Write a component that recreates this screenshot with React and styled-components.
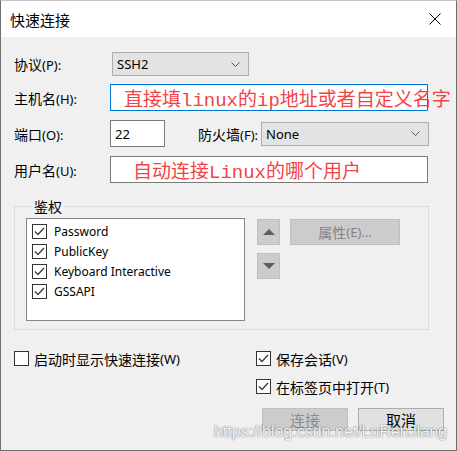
import React from "react";
import styled, { createGlobalStyle, css } from "styled-components";

const GlobalStyle = createGlobalStyle`
  body {
    margin: 0;
    background: #ffffff;
  }
  * {
    box-sizing: border-box;
  }
`;

const Window = styled.div`
  position: relative;
  width: 457px;
  height: 451px;
  display: flex;
  flex-direction: column;
  border: 1px solid #6f6f6f;
  border-top-color: #c4c4c4;
  font-family: "Noto Sans", "Noto Sans CJK SC", sans-serif;
  font-size: 13px;
  color: #000;
  overflow: hidden;
`;

const TitleBar = styled.div`
  height: 36px;
  background: #ffffff;
  display: flex;
  align-items: center;
  justify-content: space-between;
  padding: 0 15px 0 9px;
`;

const Title = styled.div`
  font-family: "Noto Sans CJK SC", sans-serif;
  font-size: 15px;
  margin-top: 1px;
`;

const Body = styled.div`
  flex: 1;
  background: #f0f0f0;
  padding: 15px 12px 0 12px;
  display: flex;
  flex-direction: column;
`;

const Row = styled.div`
  display: flex;
  align-items: center;
  height: ${({ $h }) => $h}px;
  margin-top: ${({ $mt }) => $mt || 0}px;
`;

const Label = styled.div`
  width: ${({ $w }) => $w}px;
  padding-left: ${({ $pl }) => $pl || 0}px;
  margin-left: ${({ $ml }) => $ml || 0}px;
  font-family: "Noto Sans CJK SC", sans-serif;
  font-size: 14px;
  white-space: nowrap;
`;

const Key = styled.span`
  font-family: "Noto Sans", sans-serif;
  font-size: 13px;
`;

const Select = styled.div`
  width: ${({ $w }) => $w}px;
  height: 24px;
  margin-left: ${({ $ml }) => $ml || 0}px;
  background: #e3e3e3;
  border: 1px solid #adadad;
  display: flex;
  align-items: center;
  justify-content: space-between;
  padding: 0 8px 0 4px;
  font-size: 13px;
`;

const TextBox = styled.div`
  width: ${({ $w }) => $w}px;
  height: 27px;
  background: #ffffff;
  border: 1px solid ${({ $focus }) => ($focus ? "#0078d7" : "#7a7a7a")};
  display: flex;
  align-items: center;
  padding-left: ${({ $pl }) => $pl || 4}px;
  white-space: nowrap;
  overflow: visible;
`;

const Note = styled.span`
  font-family: "Liberation Mono", "Noto Sans CJK SC", monospace;
  font-size: 19px;
  color: #f24444;
`;

const Group = styled.fieldset`
  width: 415px;
  margin: 15px 0 0 1px;
  padding: 4px 0 8px 11px;
  border: 1px solid #dcdcdc;
  display: flex;
  align-items: flex-start;
  min-width: 0;
`;

const Legend = styled.legend`
  font-family: "Noto Sans CJK SC", sans-serif;
  font-size: 14px;
  line-height: 16px;
  padding: 0 2px;
  margin-left: 6px;
`;

const ListBox = styled.div`
  width: 219px;
  height: 103px;
  background: #ffffff;
  border: 1px solid #828790;
  padding: 2px 0 0 5px;
`;

const ListItem = styled.div`
  height: 20px;
  display: flex;
  align-items: center;
  font-size: 12px;
`;

const Box = styled.span`
  width: 15px;
  height: 15px;
  flex: none;
  background: #ffffff;
  border: 1px solid #333333;
  display: inline-flex;
  align-items: center;
  justify-content: center;
  margin-right: ${({ $gap }) => $gap}px;
`;

const SideButtons = styled.div`
  display: flex;
  flex-direction: column;
  gap: 8px;
  margin: 1px 10px 0 12px;
`;

const flatBtn = css`
  background: #cccccc;
  border: 1px solid #bfbfbf;
`;

const ArrowButton = styled.div`
  ${flatBtn};
  width: 23px;
  height: 26px;
  display: flex;
  align-items: center;
  justify-content: center;
`;

const Arrow = styled.span`
  width: 0;
  height: 0;
  border-left: 6px solid transparent;
  border-right: 6px solid transparent;
  ${({ $down }) =>
    $down
      ? css`border-top: 6px solid #5f5f5f;`
      : css`border-bottom: 6px solid #5f5f5f;`}
`;

const PropButton = styled.div`
  ${flatBtn};
  width: 110px;
  height: 26px;
  margin-top: 1px;
  display: flex;
  align-items: center;
  justify-content: center;
  color: #838383;
  font-family: "Noto Sans CJK SC", sans-serif;
  font-size: 14px;
`;

const Options = styled.div`
  display: grid;
  grid-template-columns: 242px auto;
  grid-template-rows: 15px 15px;
  row-gap: 13px;
  margin: 21px 0 0 1px;
`;

const Option = styled.div`
  display: flex;
  align-items: center;
  grid-column: ${({ $col }) => $col};
  font-family: "Noto Sans CJK SC", sans-serif;
  font-size: 14px;
  white-space: nowrap;
`;

const Footer = styled.div`
  display: flex;
  justify-content: flex-end;
  gap: 10px;
  margin-top: 14px;
`;

const Button = styled.div`
  width: 86px;
  height: 23px;
  display: flex;
  align-items: center;
  justify-content: center;
  font-family: "Noto Sans CJK SC", sans-serif;
  font-size: 15px;
  ${({ $disabled }) =>
    $disabled
      ? css`
          ${flatBtn};
          color: #8c8c8c;
        `
      : css`
          background: #e1e1e1;
          border: 1px solid #adadad;
          color: #000;
        `}
`;

const Watermark = styled.div`
  position: absolute;
  right: 9px;
  bottom: 9px;
  font-family: "Liberation Sans", sans-serif;
  font-size: 16px;
  color: rgba(255, 255, 255, 0.95);
  text-shadow: 0 0 1px rgba(0, 0, 0, 0.55), 0 0 2px rgba(0, 0, 0, 0.25);
  pointer-events: none;
`;

const Chevron = () => (
  <svg width="9" height="5" viewBox="0 0 9 5">
    <path d="M0.5 0.5 L4.5 4.5 L8.5 0.5" fill="none" stroke="#555" strokeWidth="1" />
  </svg>
);

const Check = () => (
  <svg width="11" height="9" viewBox="0 0 11 9">
    <path d="M1 4.5 L4 7.5 L10 1" fill="none" stroke="#3a3a3a" strokeWidth="1.3" />
  </svg>
);

const CloseIcon = () => (
  <svg width="12" height="12" viewBox="0 0 12 12">
    <path d="M0.5 0.5 L11.5 11.5 M11.5 0.5 L0.5 11.5" stroke="#000" strokeWidth="1" />
  </svg>
);

const CheckBox = ({ checked, gap = 5 }) => (
  <Box $gap={gap}>{checked && <Check />}</Box>
);

const auths = ["Password", "PublicKey", "Keyboard Interactive", "GSSAPI"];

export default function App() {
  return (
    <>
      <GlobalStyle />
      <Window>
        <TitleBar>
          <Title>快速连接</Title>
          <CloseIcon />
        </TitleBar>
        <Body>
          <Row $h={24}>
            <Label $w={97} $pl={1}>
              协议<Key>(P):</Key>
            </Label>
            <Select $w={137} $ml={2}>
              <span>SSH2</span>
              <Chevron />
            </Select>
          </Row>
          <Row $h={27} $mt={8}>
            <Label $w={97} $pl={1}>
              主机名<Key>(H):</Key>
            </Label>
            <TextBox $w={318} $focus $pl={13}>
              <Note>直接填linux的ip地址或者自定义名字</Note>
            </TextBox>
          </Row>
          <Row $h={27} $mt={9}>
            <Label $w={97} $pl={1}>
              端口<Key>(O):</Key>
            </Label>
            <TextBox $w={55}>22</TextBox>
            <Label $w={63} $ml={33}>
              防火墙<Key>(F):</Key>
            </Label>
            <Select $w={168}>
              <span>None</span>
              <Chevron />
            </Select>
          </Row>
          <Row $h={27} $mt={9}>
            <Label $w={97} $pl={1}>
              用户名<Key>(U):</Key>
            </Label>
            <TextBox $w={318} $pl={22}>
              <Note>自动连接Linux的哪个用户</Note>
            </TextBox>
          </Row>

          <Group>
            <Legend>鉴权</Legend>
            <ListBox>
              {auths.map((a) => (
                <ListItem key={a}>
                  <CheckBox checked gap={7} />
                  {a}
                </ListItem>
              ))}
            </ListBox>
            <SideButtons>
              <ArrowButton>
                <Arrow />
              </ArrowButton>
              <ArrowButton>
                <Arrow $down />
              </ArrowButton>
            </SideButtons>
            <PropButton>
              属性<Key>(E)...</Key>
            </PropButton>
          </Group>

          <Options>
            <Option $col={1}>
              <CheckBox />
              启动时显示快速连接<Key>(W)</Key>
            </Option>
            <Option $col={2}>
              <CheckBox checked />
              保存会话<Key>(V)</Key>
            </Option>
            <Option $col={2}>
              <CheckBox checked />
              在标签页中打开<Key>(T)</Key>
            </Option>
          </Options>

          <Footer>
            <Button $disabled>连接</Button>
            <Button>取消</Button>
          </Footer>
        </Body>
        <Watermark>https://blog.csdn.net/LuRenJiang</Watermark>
      </Window>
    </>
  );
}
